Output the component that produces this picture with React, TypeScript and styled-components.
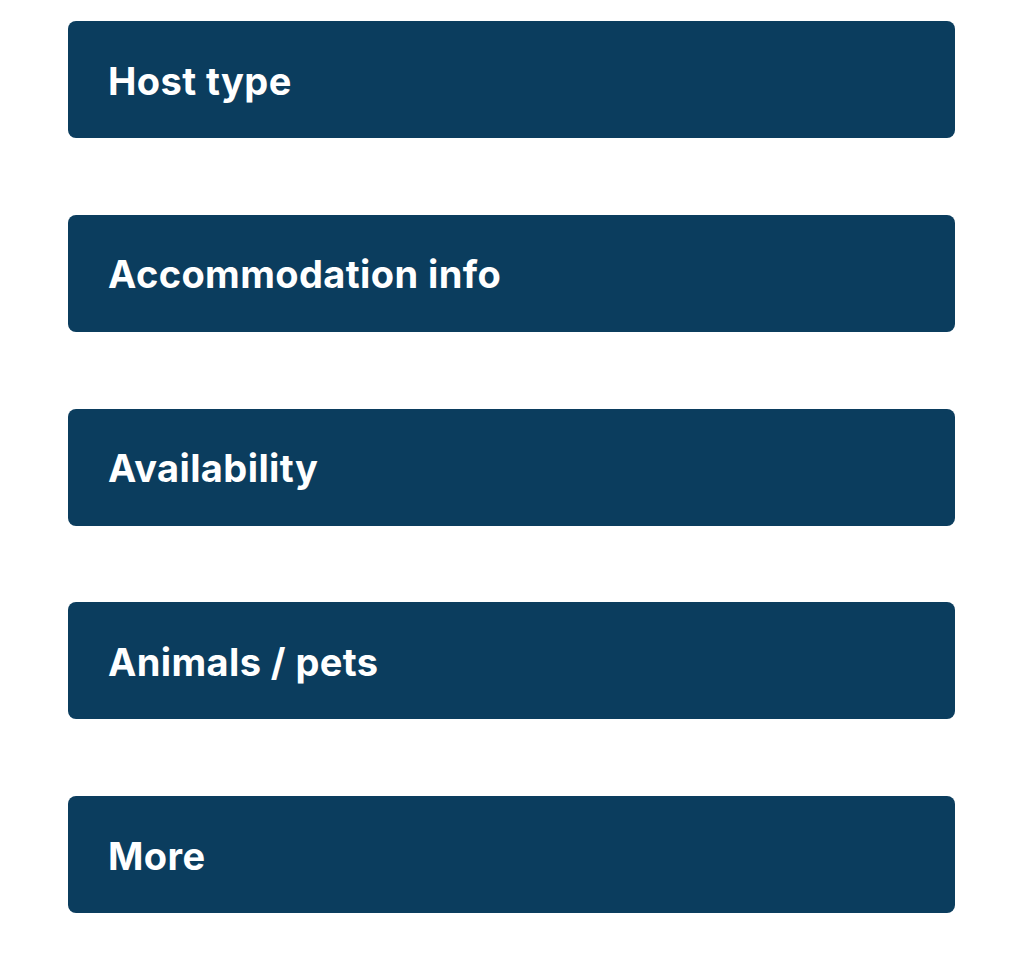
import React from 'react';
import styled, {createGlobalStyle} from 'styled-components';

const GlobalStyle = createGlobalStyle`
  html, body {
    margin: 0;
    padding: 0;
    background: #ffffff;
  }
`

const items = ['Host type', 'Accommodation info', 'Availability', 'Animals / pets', 'More'];

const App: React.FC = () => {
    return (
        <>
            <GlobalStyle/>
            <StyledList>
                {items.map(item => (
                    <StyledSection key={item}>
                        <StyledTitle>{item}</StyledTitle>
                    </StyledSection>
                ))}
            </StyledList>
        </>
    );
};

export default App;

// Style
const StyledList = styled.div`
  display: flex;
  flex-direction: column;
  gap: 76.75px;
  width: 887px;
  margin-left: 68px;
  padding-top: 21px;
`
const StyledSection = styled.div`
  display: flex;
  align-items: center;
  height: 117px;
  padding: 0 40px;
  border-radius: 8px;
  background-color: #0b3d5e;
  box-sizing: border-box;
`
const StyledTitle = styled.h2`
  margin: 0;
  padding-top: 2px;
  font-family: "Inter", "Liberation Sans", sans-serif;
  font-size: 38px;
  font-weight: 700;
  letter-spacing: 0.4px;
  color: #ffffff;
`
